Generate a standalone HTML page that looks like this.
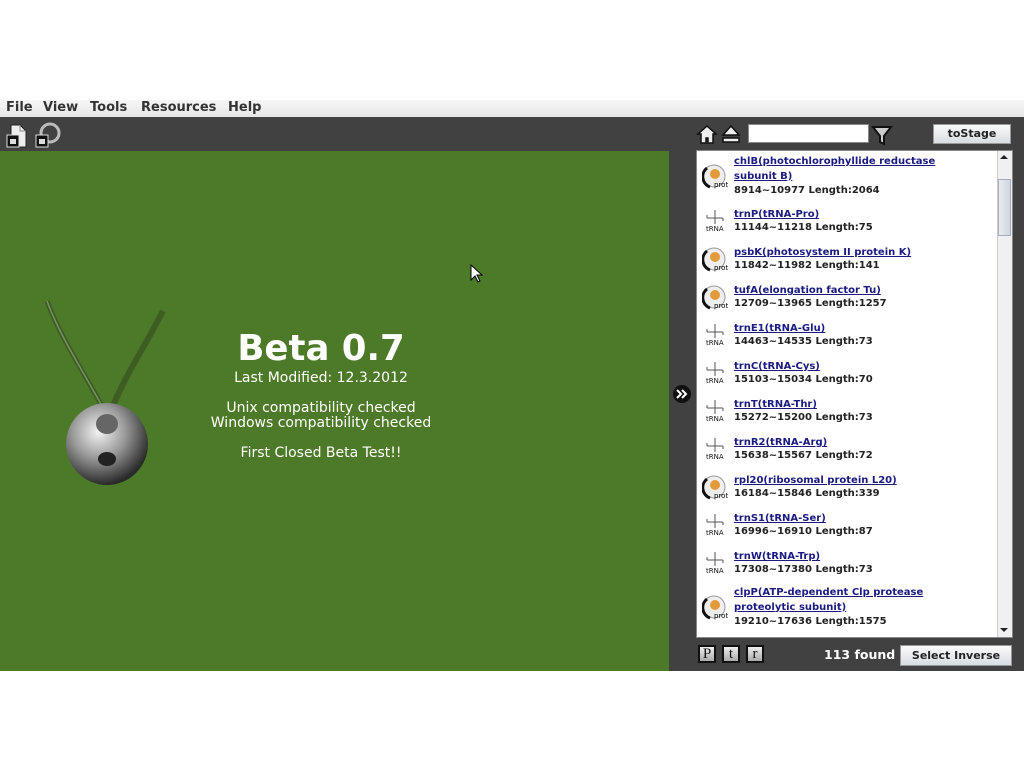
<!DOCTYPE html>
<html><head><meta charset="utf-8"><style>
*{margin:0;padding:0;box-sizing:border-box}
body{width:1024px;height:771px;background:#fff;position:relative;overflow:hidden;font-family:"DejaVu Sans","Liberation Sans",sans-serif}
.a{position:absolute}
#menu{left:0;top:100px;width:1024px;height:17px;background:linear-gradient(#f6f6f6,#e6e6e6);font-size:13px;font-weight:bold;color:#333;line-height:16px}
#menu span{position:absolute;top:0}
#tb{left:0;top:117px;width:1024px;height:34px;background:#414141}
#green{left:0;top:151px;width:669px;height:520px;background:#4d7a28}
#rp{left:669px;top:151px;width:355px;height:520px;background:#414141}
#list{left:696px;top:150px;width:317px;height:488px;background:#fff;border:1px solid #888;overflow:hidden}
.e{position:absolute;left:37px;font-size:10px;font-weight:bold;line-height:13px;color:#222;white-space:nowrap}
.e u{color:#1a1a80}
.e.t3{line-height:14.5px}
.ic{position:absolute;left:5px;width:26px;height:26px}
.ct{color:#fff;text-align:center;position:absolute;width:340px;left:151px;font-size:14px}
.btn{position:absolute;background:linear-gradient(#fafafa,#d8dde3);border:1px solid #999;font-size:11px;font-weight:bold;color:#222;text-align:center}
.sq{position:absolute;width:18px;height:18px;top:645px;background:linear-gradient(#eee,#aaa);border:2px solid #111;font-family:"Liberation Serif",serif;font-size:15px;line-height:14px;text-align:center;color:#111}
</style></head><body>
<div class="a" id="menu"><span style="left:6px">File</span><span style="left:43px">View</span><span style="left:90px">Tools</span><span style="left:141px">Resources</span><span style="left:228px">Help</span></div>
<div class="a" id="tb">
<svg class="a" style="left:5px;top:4px" width="56" height="28"><path d="M6 4h9l6 6v16H6z" fill="#eee" stroke="#222"/><path d="M15 4v6h6" fill="none" stroke="#888"/><rect x="2" y="14" width="12" height="12" fill="#111" stroke="#ddd"/><rect x="5" y="18" width="6" height="5" fill="#ddd"/><circle cx="45" cy="12" r="9" fill="none" stroke="#bbb" stroke-width="3"/><rect x="31" y="14" width="12" height="12" fill="#111" stroke="#ddd"/><rect x="34" y="18" width="6" height="5" fill="#ddd"/></svg>
</div>
<div class="a" id="green">
<svg class="a" style="left:35px;top:145px" width="140" height="200"><path d="M12 5C25 40 45 70 67 110" stroke="#3d5d22" stroke-width="5" fill="none"/><path d="M12 5C25 40 45 70 67 110" stroke="#7a8f6a" stroke-width="1.5" fill="none"/><path d="M128 15C110 50 90 80 78 110" stroke="#3d5d22" stroke-width="6" fill="none"/><defs><radialGradient id="g" cx="40%" cy="35%" r="65%"><stop offset="0" stop-color="#f4f4f4"/><stop offset=".5" stop-color="#999"/><stop offset="1" stop-color="#2a2a2a"/></radialGradient></defs><circle cx="72" cy="148" r="41" fill="url(#g)"/><ellipse cx="72" cy="128" rx="11" ry="10" fill="#666"/><ellipse cx="72" cy="163" rx="9" ry="7" fill="#222"/></svg>
<div class="ct" style="top:179px;font-size:35.5px;font-weight:bold;line-height:38px">Beta 0.7</div>
<div class="ct" style="top:219px">Last Modified: 12.3.2012</div>
<div class="ct" style="top:249px">Unix compatibility checked</div>
<div class="ct" style="top:264px">Windows compatibility checked</div>
<div class="ct" style="top:294px">First Closed Beta Test!!</div>
</div>
<div class="a" id="rp"></div>
<svg class="a" style="left:696px;top:124px" width="200" height="22"><path d="M2 10L11 2l9 8h-3v9h-5v-5h-2v5H5v-9z" fill="#eee" stroke="#111" stroke-width="1.5"/><path d="M27 11l8-9 8 9z M27 14h16v4H27z" fill="#eee" stroke="#111" stroke-width="1.5"/><path d="M177 3h18l-7 9v8l-4-2v-6z" fill="#ccc" stroke="#111" stroke-width="2"/></svg>
<div class="a" style="left:748px;top:124px;width:121px;height:19px;background:#fff;border:1px solid #888"></div>
<div class="btn" style="left:933px;top:124px;width:78px;height:20px;line-height:18px">toStage</div>
<svg class="a" style="left:672px;top:384px" width="20" height="20"><circle cx="10" cy="10" r="9" fill="#111"/><path d="M5 6l4 4-4 4M10 6l4 4-4 4" stroke="#fff" stroke-width="2" fill="none"/></svg>
<div class="a" id="list">
<div class="a" style="right:0;top:0;width:15px;height:486px;background:#eef0f2;border-left:1px solid #ccc"></div>
<div class="a" style="right:1px;top:28px;width:13px;height:57px;background:linear-gradient(90deg,#e8ecf0,#cfd6de);border:1px solid #aab"></div>
<div class="a" style="right:4px;top:4px;border:4px solid transparent;border-bottom:4px solid #222;border-top:0"></div>
<div class="a" style="right:4px;top:477px;border:4px solid transparent;border-top:4px solid #222;border-bottom:0"></div>
<svg width="0" height="0"><defs><g id="p"><circle cx="12" cy="13" r="11" fill="#eee" stroke="#999"/><path d="M5 5A11 11 0 0 0 8 24" stroke="#111" stroke-width="3" fill="none"/><circle cx="13" cy="11" r="5" fill="#e39a3a"/><text x="12" y="24" font-size="7" font-family="DejaVu Sans">prot</text></g><g id="t"><path d="M13 2v8M5 10h16M13 10v6M5 10v-3M21 10v3" stroke="#555" fill="none"/><text x="4" y="23" font-size="7" font-family="DejaVu Sans" fill="#111">tRNA</text></g></defs></svg>
<svg class="ic" style="top:12px"><use href="#p"/></svg><div class="e t3" style="top:4px"><u>chlB(photochlorophyllide reductase</u><br><u>subunit B)</u><br>8914~10977 Length:2064</div>
<svg class="ic" style="top:57px"><use href="#t"/></svg><div class="e" style="top:57px"><u>trnP(tRNA-Pro)</u><br>11144~11218 Length:75</div>
<svg class="ic" style="top:95px"><use href="#p"/></svg><div class="e" style="top:95px"><u>psbK(photosystem II protein K)</u><br>11842~11982 Length:141</div>
<svg class="ic" style="top:133px"><use href="#p"/></svg><div class="e" style="top:133px"><u>tufA(elongation factor Tu)</u><br>12709~13965 Length:1257</div>
<svg class="ic" style="top:171px"><use href="#t"/></svg><div class="e" style="top:171px"><u>trnE1(tRNA-Glu)</u><br>14463~14535 Length:73</div>
<svg class="ic" style="top:209px"><use href="#t"/></svg><div class="e" style="top:209px"><u>trnC(tRNA-Cys)</u><br>15103~15034 Length:70</div>
<svg class="ic" style="top:247px"><use href="#t"/></svg><div class="e" style="top:247px"><u>trnT(tRNA-Thr)</u><br>15272~15200 Length:73</div>
<svg class="ic" style="top:285px"><use href="#t"/></svg><div class="e" style="top:285px"><u>trnR2(tRNA-Arg)</u><br>15638~15567 Length:72</div>
<svg class="ic" style="top:323px"><use href="#p"/></svg><div class="e" style="top:323px"><u>rpl20(ribosomal protein L20)</u><br>16184~15846 Length:339</div>
<svg class="ic" style="top:361px"><use href="#t"/></svg><div class="e" style="top:361px"><u>trnS1(tRNA-Ser)</u><br>16996~16910 Length:87</div>
<svg class="ic" style="top:399px"><use href="#t"/></svg><div class="e" style="top:399px"><u>trnW(tRNA-Trp)</u><br>17308~17380 Length:73</div>
<svg class="ic" style="top:443px"><use href="#p"/></svg><div class="e t3" style="top:435px"><u>clpP(ATP-dependent Clp protease</u><br><u>proteolytic subunit)</u><br>19210~17636 Length:1575</div>
</div>
<div class="sq" style="left:698px">P</div><div class="sq" style="left:722px">t</div><div class="sq" style="left:746px">r</div>
<div class="a" style="left:824px;top:647px;color:#fff;font-size:12.5px;font-weight:bold">113 found</div>
<div class="btn" style="left:900px;top:645px;width:112px;height:21px;line-height:20px">Select Inverse</div>
<svg class="a" style="left:470px;top:264px" width="14" height="20"><path d="M1 1v15l4-4 3 6 2-1-3-6h5z" fill="#fff" stroke="#000"/></svg>
</body></html>
